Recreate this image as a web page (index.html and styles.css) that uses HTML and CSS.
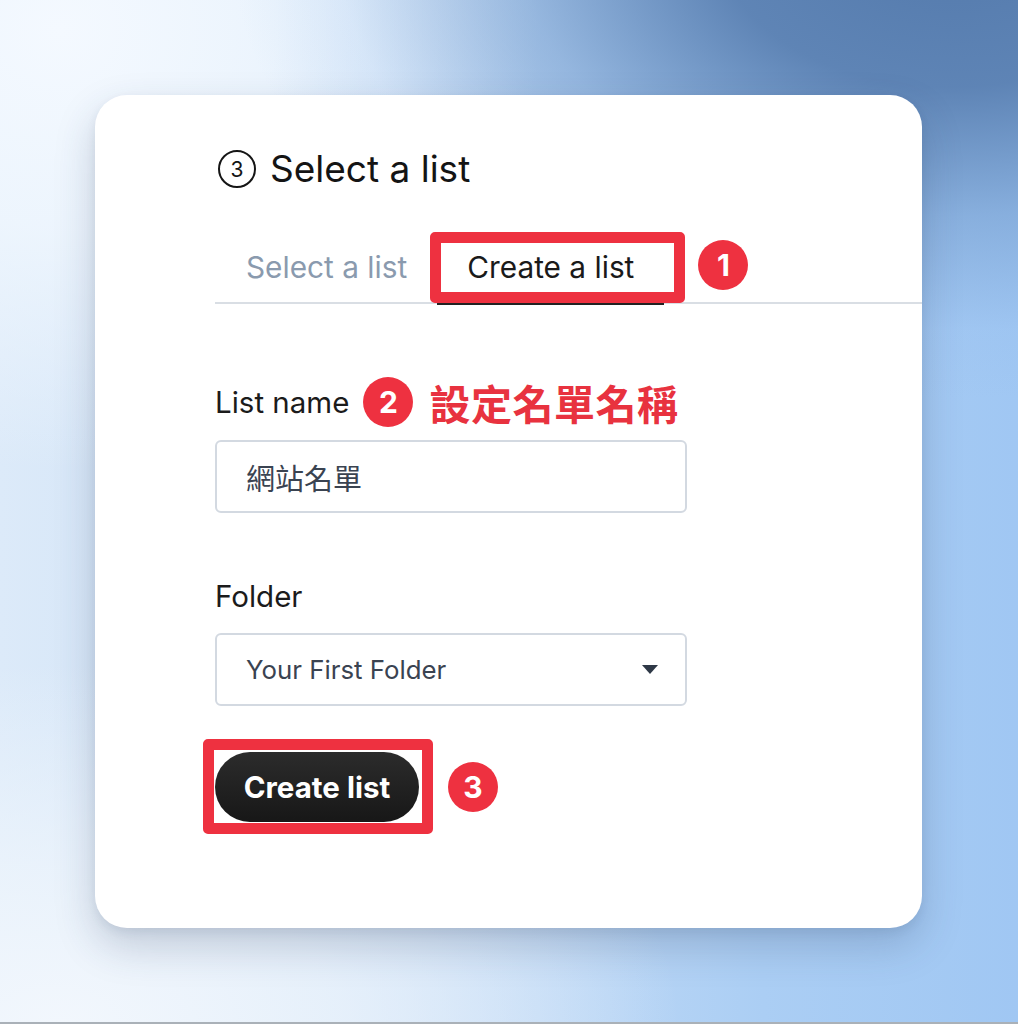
FILE: index.html
```html
<!DOCTYPE html>
<html lang="zh-Hant">
<head>
<meta charset="utf-8">
<title>Create a list</title>
<link rel="stylesheet" href="styles.css">
</head>
<body>
  <div class="card">
    <div class="heading">
      <span class="step-icon">3</span>
      <h1 class="heading-text">Select a list</h1>
    </div>

    <div class="tab-bar">
      <div class="tab">Select a list</div>
      <div class="tab tab-active">Create a list<span class="mark-box mark-tab"></span></div>
      <span class="badge badge-tab">1</span>
    </div>

    <div class="field-label label-name">
      <span>List name</span>
      <span class="badge badge-name">2</span>
      <span class="note">設定名單名稱</span>
    </div>
    <div class="input">網站名單</div>

    <div class="field-label label-folder"><span>Folder</span></div>
    <div class="input select">
      <span>Your First Folder</span>
      <svg class="caret" width="16" height="9" viewBox="0 0 16 9"><path d="M0 0 H16 L8 9 Z" fill="#2e3846"/></svg>
    </div>

    <div class="actions">
      <div class="btn-wrap">
        <button class="btn">Create list</button>
        <span class="mark-box mark-btn"></span>
      </div>
      <span class="badge badge-btn">3</span>
    </div>
  </div>
</body>
</html>
```

FILE: styles.css
```css
html, body {
  margin: 0;
}
body {
  width: 1018px;
  height: 1024px;
  box-sizing: border-box;
  padding: 95px 0 0 95px;
  font-family: Inter, "Noto Sans", "Noto Sans CJK TC", sans-serif;
  color: #1b1b1b;
  border-bottom: 2px solid #aab1b8;
  overflow: hidden;
  background:
    radial-gradient(ellipse 720px 460px at 950px -60px, rgba(84,122,172,1) 0%, rgba(88,126,176,0.92) 32%, rgba(110,150,200,0.5) 60%, rgba(140,180,230,0.12) 85%, rgba(140,180,230,0) 100%),
    radial-gradient(ellipse 480px 440px at 60px 30px, rgba(244,249,255,1) 0%, rgba(240,247,254,0.85) 45%, rgba(240,247,254,0) 100%),
    radial-gradient(ellipse 620px 360px at 60px 1024px, rgba(242,247,253,1) 0%, rgba(238,245,252,0.75) 45%, rgba(238,245,252,0) 100%),
    linear-gradient(90deg, #dceaf9 0%, #c9def6 40%, #abcef4 75%, #a0c7f3 100%);
}

.card {
  width: 827px;
  height: 833px;
  box-sizing: border-box;
  background: #ffffff;
  border-radius: 32px;
  padding: 55px 0 0 120px;
  box-shadow: 0 18px 40px rgba(40, 60, 95, 0.22), 0 4px 10px rgba(40, 60, 95, 0.08);
}

/* heading */
.heading {
  display: flex;
  align-items: center;
  gap: 14px;
  height: 38px;
}
.step-icon {
  margin-left: 3px;
  width: 38px;
  height: 38px;
  box-sizing: border-box;
  border: 2.5px solid #151515;
  border-radius: 50%;
  display: flex;
  align-items: center;
  justify-content: center;
  font-size: 21px;
  font-weight: 400;
  color: #151515;
}
.heading-text {
  margin: 0;
  font-size: 37px;
  font-weight: 400;
  line-height: 38px;
  color: #141414;
}

/* tabs */
.tab-bar {
  margin-top: 44px;
  height: 72px;
  box-sizing: border-box;
  display: flex;
  align-items: stretch;
  border-bottom: 2px solid #d9dee4;
}
.tab {
  position: relative;
  display: flex;
  align-items: center;
  padding: 0 30px 0 31px;
  font-size: 29.8px;
  color: #8a9aae;
}
.tab-active {
  padding: 0 30px;
  color: #1a1a1a;
}
.tab-active::after {
  content: "";
  position: absolute;
  left: 0;
  right: 0;
  bottom: -3px;
  height: 4px;
  background: #222;
}

/* annotation */
.mark-box {
  position: absolute;
  border: 11px solid #ee3140;
  border-radius: 5px;
  z-index: 2;
}
.mark-tab {
  left: -7px;
  right: -21px;
  top: 0;
  bottom: -1px;
}
.mark-btn {
  left: -12px;
  right: -14px;
  top: -13px;
  bottom: -12px;
}
.badge {
  width: 50px;
  height: 50px;
  flex: none;
  border-radius: 50%;
  background: #ee3140;
  color: #ffffff;
  display: flex;
  align-items: center;
  justify-content: center;
  font-size: 30px;
  font-weight: 700;
  line-height: 1;
}
.badge-tab {
  align-self: center;
  margin-left: 34px;
  margin-top: -4px;
}
.badge-name {
  margin-left: 14px;
}
.badge-btn {
  margin-left: 29px;
}

/* fields */
.field-label {
  display: flex;
  align-items: center;
  height: 50px;
  font-size: 29.5px;
  color: #1b1b1b;
}
.label-name {
  margin-top: 73px;
}
.label-folder {
  margin-top: 58px;
}
.note {
  margin-left: 16px;
  font-family: "Noto Sans CJK TC", "Noto Sans CJK SC", sans-serif;
  font-size: 41px;
  font-weight: 700;
  color: #e8323f;
  letter-spacing: 0.5px;
}
.input {
  margin-top: 13px;
  width: 472px;
  height: 73px;
  box-sizing: border-box;
  border: 2px solid #d3d9e1;
  border-radius: 6px;
  padding: 0 27px 0 29px;
  display: flex;
  align-items: center;
  font-family: Inter, "Noto Sans CJK TC", sans-serif;
  font-size: 29px;
  color: #3a4351;
}
.select {
  margin-top: 12px;
  justify-content: space-between;
  font-size: 25.8px;
}

/* actions */
.actions {
  margin-top: 46px;
  display: flex;
  align-items: center;
}
.btn-wrap {
  position: relative;
}
.btn {
  display: block;
  width: 204px;
  height: 70px;
  border: none;
  border-radius: 35px;
  background: linear-gradient(180deg, #2c2c2c 0%, #171717 100%);
  color: #ffffff;
  font-family: Inter, sans-serif;
  font-size: 29.5px;
  font-weight: 700;
  padding: 0;
}
```
